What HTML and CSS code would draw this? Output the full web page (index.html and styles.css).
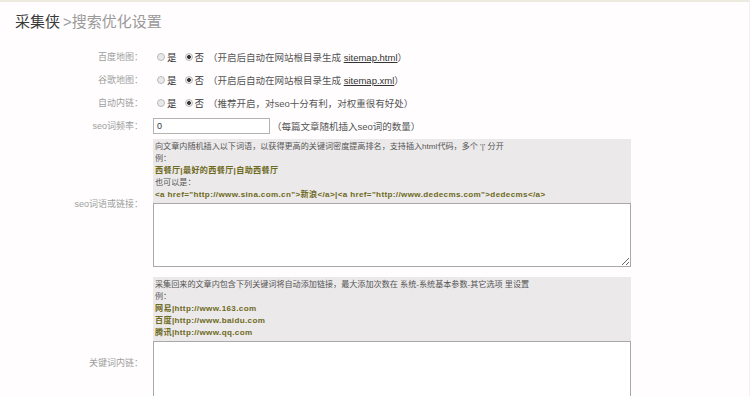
FILE: index.html
```html
<!DOCTYPE html>
<html lang="zh-CN">
<head>
<meta charset="utf-8">
<title>搜索优化设置</title>
<link rel="stylesheet" href="styles.css">
</head>
<body>
<div class="page">
<div class="topline"></div>
<h1 class="title"><span class="brand">采集侠</span><span class="crumb">&gt;搜索优化设置</span></h1>
<div class="form">
  <div class="row">
    <div class="label">百度地图：</div>
    <div class="field">
      <label class="opt"><input type="radio" name="bd" class="radio">是</label>
      <label class="opt"><input type="radio" name="bd" class="radio" checked>否</label>
      <span class="hint">（开启后自动在网站根目录生成 <a class="link" href="#">sitemap.html</a>）</span>
    </div>
  </div>
  <div class="row">
    <div class="label">谷歌地图：</div>
    <div class="field">
      <label class="opt"><input type="radio" name="gg" class="radio">是</label>
      <label class="opt"><input type="radio" name="gg" class="radio" checked>否</label>
      <span class="hint">（开启后自动在网站根目录生成 <a class="link" href="#">sitemap.xml</a>）</span>
    </div>
  </div>
  <div class="row">
    <div class="label">自动内链：</div>
    <div class="field">
      <label class="opt"><input type="radio" name="nl" class="radio">是</label>
      <label class="opt"><input type="radio" name="nl" class="radio" checked>否</label>
      <span class="hint">（推荐开启，对seo十分有利，对权重很有好处）</span>
    </div>
  </div>
  <div class="row">
    <div class="label">seo词频率：</div>
    <div class="field">
      <input type="text" class="text" value="0">
      <span class="hint">（每篇文章随机插入seo词的数量）</span>
    </div>
  </div>
  <div class="row block first">
    <div class="label">seo词语或链接：</div>
    <div class="field col">
      <div class="note">
        <div class="line">向文章内随机插入以下词语，以获得更高的关键词密度提高排名，支持插入html代码，多个 '|' 分开</div>
        <div class="line">例：</div>
        <div class="line ex">西餐厅|最好的西餐厅|自助西餐厅</div>
        <div class="line">也可以是：</div>
        <div class="line ex">&lt;a href="http://www.sina.com.cn"&gt;新浪&lt;/a&gt;|&lt;a href="http://www.dedecms.com"&gt;dedecms&lt;/a&gt;</div>
      </div>
      <textarea class="area small"></textarea>
    </div>
  </div>
  <div class="row block second">
    <div class="label">关键词内链：</div>
    <div class="field col">
      <div class="note">
        <div class="line">采集回来的文章内包含下列关键词将自动添加链接，最大添加次数在 系统-系统基本参数-其它选项 里设置</div>
        <div class="line">例：</div>
        <div class="line ex">网易|http://www.163.com</div>
        <div class="line ex">百度|http://www.baidu.com</div>
        <div class="line ex">腾讯|http://www.qq.com</div>
      </div>
      <textarea class="area big"></textarea>
    </div>
  </div>
</div>
</div>
</body>
</html>
```

FILE: styles.css
```css
html, body {
  margin: 0;
  padding: 0;
  background: #fffdfe;
  font-family: "Liberation Sans", "Noto Sans CJK SC", sans-serif;
  overflow: hidden;
}

.page {
  border-right: 1px solid #f2f0f2;
  min-height: 396px;
}

.topline {
  height: 2px;
  background: #ecebdd;
}

.title {
  margin: 0;
  padding: 10px 0 0 15px;
  height: 33px;
  box-sizing: border-box;
  font-size: 15px;
  line-height: 20px;
  font-weight: normal;
}

.brand { color: #3a3a3a; }
.crumb { color: #9a9a9a; margin-left: 3px; }

.form {
  display: flex;
  flex-direction: column;
  padding-top: 10px;
}

.row {
  display: flex;
  align-items: center;
  height: 23px;
}

.row.block { height: auto; }
.row.first { margin-top: 2px; }
.row.second { margin-top: 10px; }

.label {
  width: 143px;
  flex: none;
  text-align: right;
  font-size: 9px;
  color: #9d9d9d;
}

.field {
  margin-left: 10px;
  display: flex;
  align-items: center;
  font-size: 9.5px;
  color: #555;
}

.field.col {
  flex-direction: column;
  align-items: stretch;
  width: 478px;
}

.opt {
  display: flex;
  align-items: center;
  color: #333;
  margin-right: 4px;
}

.radio {
  appearance: none;
  -webkit-appearance: none;
  width: 8px;
  height: 8px;
  margin: 0 2px 0 4px;
  border: 1px solid #b9b9b9;
  border-radius: 50%;
  background: #e9e9e9;
  box-sizing: border-box;
}

.radio:checked {
  background: radial-gradient(circle, #3a3a3a 0 1.6px, #e9e9e9 2.2px);
}

.hint { color: #555; }

.link {
  color: #333;
  text-decoration: underline;
}

.text {
  width: 117px;
  height: 16px;
  box-sizing: border-box;
  border: 1px solid #b3b3b3;
  background: #fff;
  padding: 0 3px;
  margin: 0 2px 0 0;
  font-family: inherit;
  font-size: 9px;
  color: #333;
}

.note {
  background: #ebe9ea;
  padding: 2px;
  height: 64px;
  box-sizing: border-box;
  font-size: 8.1px;
  line-height: 12px;
  color: #555;
}

.line { white-space: nowrap; }

.ex {
  color: #6e6a1c;
  font-weight: bold;
  letter-spacing: 0.35px;
}

.area {
  display: block;
  width: 478px;
  margin: 0;
  box-sizing: border-box;
  border: 1px solid #a9a9a9;
  background: #fff;
}

.area.small { height: 64px; }
.area.big { height: 106px; }
```
